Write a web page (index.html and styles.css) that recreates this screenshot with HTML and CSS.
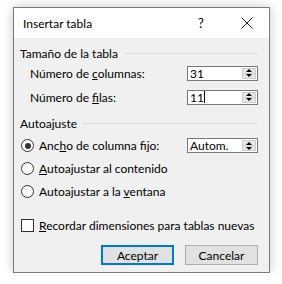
FILE: index.html
```html
<!DOCTYPE html>
<html lang="es">
<head>
  <meta charset="UTF-8" />
  <title>Insertar tabla</title>
  <link rel="stylesheet" href="styles.css">
</head>
<body>
  <div class="dialog">
    <div class="titlebar">
      <span class="title">Insertar tabla</span>
      <span class="help">?</span>
      <span class="close">
        <svg width="12" height="12" viewBox="0 0 12 12"><path d="M0.5 0.5 L11.5 11.5 M11.5 0.5 L0.5 11.5" stroke="#222" stroke-width="1" fill="none"/></svg>
      </span>
    </div>

    <div class="content">
      <div class="group-title"><span>Tamaño de la tabla</span><span class="rule"></span></div>
      <div class="row">
        <span class="label">Número de <u>c</u>olumnas:</span>
        <div class="spin"><span class="value">31</span><div class="arrows"><span class="up"></span><span class="down"></span></div></div>
      </div>
      <div class="row">
        <span class="label">Número de <u>f</u>ilas:</span>
        <div class="spin"><span class="value">11<span class="caret"></span></span><div class="arrows"><span class="up"></span><span class="down"></span></div></div>
      </div>

      <div class="group-title second"><span>Autoajuste</span><span class="rule"></span></div>
      <div class="option">
        <span class="radio checked"></span>
        <span class="label">Anc<u>h</u>o de columna fijo:</span>
        <div class="spin"><span class="value">Autom.</span><div class="arrows"><span class="up"></span><span class="down"></span></div></div>
      </div>
      <div class="option">
        <span class="radio"></span>
        <span class="label"><u>A</u>utoajustar al contenido</span>
      </div>
      <div class="option">
        <span class="radio"></span>
        <span class="label">Autoajustar a la <u>v</u>entana</span>
      </div>

      <div class="option remember">
        <span class="checkbox"></span>
        <span class="label"><u>R</u>ecordar dimensiones para tablas nuevas</span>
      </div>

      <div class="buttons">
        <button class="btn primary">Aceptar</button>
        <button class="btn">Cancelar</button>
      </div>
    </div>
  </div>
</body>
</html>
```

FILE: styles.css
```css
body {
  margin: 0;
  background: #ffffff;
  font-family: Lato, sans-serif;
  font-size: 12px;
  color: #000;
}

.dialog {
  width: 255px;
  margin: 7px 0 0 13px;
  border: 1px solid #7a7a7a;
  background: #f0f0f0;
  box-shadow: 0 0 10px rgba(0, 0, 0, 0.22);
}

.titlebar {
  display: flex;
  align-items: center;
  height: 30px;
  background: #ffffff;
  padding-left: 9px;
}

.title {
  flex: 1;
}

.help {
  width: 20px;
  font-size: 13px;
  margin-right: 19px;
}

.close {
  display: flex;
  width: 28px;
  padding-left: 4px;
}

.content {
  padding: 7px 11px 7px 6px;
}

.group-title {
  display: flex;
  align-items: center;
  height: 16px;
}

.group-title.second {
  margin-top: 6px;
  margin-bottom: 3px;
}

.rule {
  flex: 1;
  height: 1px;
  background: #dcdcdc;
  margin-left: 6px;
}

.row {
  display: flex;
  align-items: center;
  height: 24px;
  padding-left: 10px;
}

.row .label,
.option .label {
  flex: 1;
  white-space: nowrap;
}

.spin {
  display: flex;
  flex-shrink: 0;
  width: 71px;
  height: 15px;
  border: 1px solid #7a7a7a;
  background: #ffffff;
  box-sizing: border-box;
}

.value {
  flex: 1;
  display: flex;
  align-items: center;
  padding-left: 2px;
  line-height: 13px;
}

.caret {
  display: inline-block;
  width: 1px;
  height: 12px;
  background: #000;
}

.arrows {
  display: flex;
  flex-direction: column;
  width: 14px;
  margin: 1px;
}

.arrows span {
  flex: 1;
  background: #e6e6e6;
  border: 1px solid #cfcfcf;
  display: flex;
  align-items: center;
  justify-content: center;
}

.arrows .up { border-bottom: none; }

.arrows .up::after {
  content: "";
  border-left: 3px solid transparent;
  border-right: 3px solid transparent;
  border-bottom: 3px solid #000;
}

.arrows .down::after {
  content: "";
  border-left: 3px solid transparent;
  border-right: 3px solid transparent;
  border-top: 3px solid #000;
}

.option {
  display: flex;
  align-items: center;
  height: 23px;
  padding-left: 1px;
}

.radio {
  flex-shrink: 0;
  width: 11px;
  height: 11px;
  border: 1px solid #333;
  border-radius: 50%;
  background: #fff;
  margin-right: 5px;
  display: flex;
  align-items: center;
  justify-content: center;
}

.radio.checked::after {
  content: "";
  width: 6px;
  height: 6px;
  border-radius: 50%;
  background: #333;
}

.remember {
  margin-top: 11px;
}

.checkbox {
  flex-shrink: 0;
  width: 11px;
  height: 11px;
  border: 1px solid #333;
  background: #fff;
  margin-right: 5px;
}

.buttons {
  display: flex;
  justify-content: flex-end;
  gap: 11px;
  margin-top: 8px;
}

.btn {
  width: 73px;
  height: 20px;
  font-family: Lato, sans-serif;
  font-size: 12px;
  background: #e1e1e1;
  border: 1px solid #adadad;
  padding: 0;
  color: #000;
}

.btn.primary {
  border: 2px solid #0078d7;
}
```
